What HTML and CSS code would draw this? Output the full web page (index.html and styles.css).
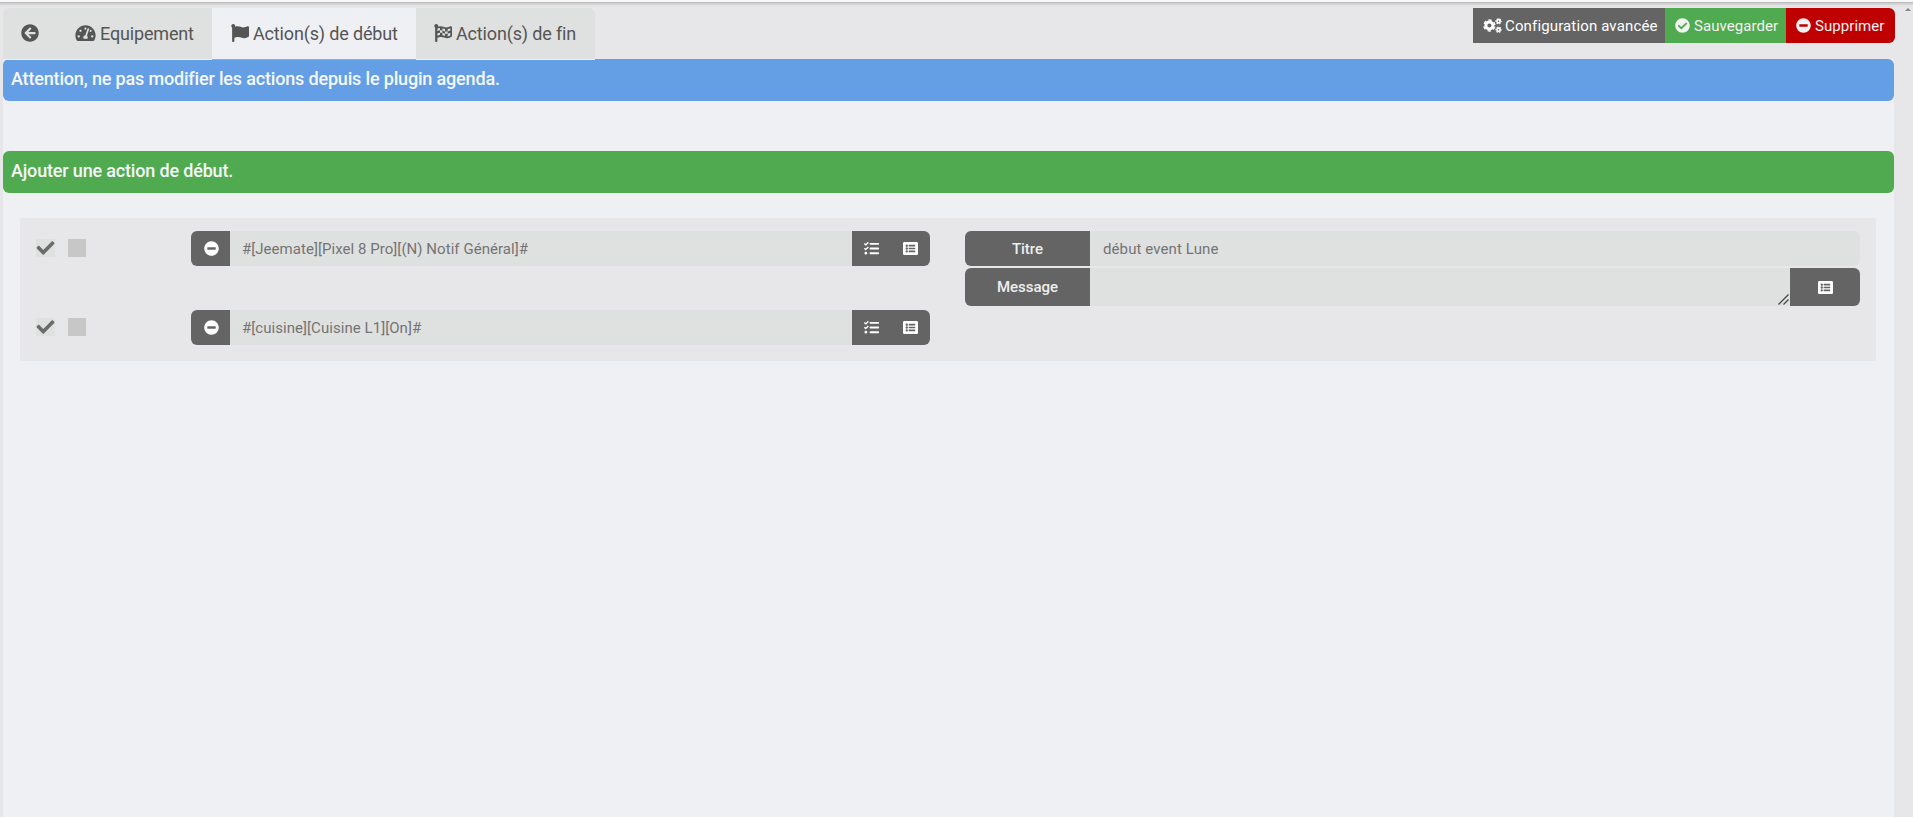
FILE: index.html
```html
<!DOCTYPE html>
<html lang="fr">
<head>
<meta charset="utf-8">
<title>Action(s) de début</title>
<link rel="stylesheet" href="styles.css">
</head>
<body>
<svg class="defs" aria-hidden="true">
  <symbol id="back" viewBox="0 0 512 512"><path d="M256 504C119 504 8 393 8 256S119 8 256 8s248 111 248 248-111 248-248 248zm28.9-143.6L209.4 288H392c13.3 0 24-10.7 24-24v-16c0-13.3-10.7-24-24-24H209.4l75.5-72.4c9.7-9.3 9.9-24.8.4-34.3l-11-10.9c-9.4-9.4-24.6-9.4-33.9 0L107.7 239c-9.4 9.4-9.4 24.6 0 33.9l132.7 132.7c9.4 9.4 24.6 9.4 33.9 0l11-10.9c9.5-9.5 9.3-25-.4-34.3z"/></symbol>
  <symbol id="gauge" viewBox="0 0 576 512"><path d="M288 32C128.94 32 0 160.94 0 320c0 52.8 14.25 102.26 39.06 144.8 5.61 9.62 16.3 15.2 27.44 15.2h443c11.14 0 21.83-5.58 27.44-15.2C561.75 422.26 576 372.8 576 320c0-159.06-128.94-288-288-288zm0 64c14.71 0 26.58 10.13 30.32 23.65-1.11 2.26-2.64 4.23-3.45 6.67l-9.22 27.67c-5.13 3.49-10.97 6.01-17.64 6.01-17.67 0-32-14.33-32-32S270.33 96 288 96zM96 384c-17.67 0-32-14.33-32-32s14.33-32 32-32 32 14.33 32 32-14.33 32-32 32zm48-160c-17.67 0-32-14.33-32-32s14.33-32 32-32 32 14.33 32 32-14.33 32-32 32zm246.77-72.41l-61.33 184C343.13 347.33 352 364.54 352 384c0 11.72-3.38 22.55-8.88 32H232.88c-5.5-9.45-8.88-20.28-8.88-32 0-33.94 26.5-61.43 59.9-63.59l61.34-184.01c4.17-12.56 17.73-19.45 30.36-15.17 12.57 4.19 19.35 17.79 15.17 30.36zm14.66 57.2l15.52-46.55c3.47-1.29 7.13-2.23 11.05-2.23 17.67 0 32 14.33 32 32s-14.33 32-32 32c-11.38-.01-20.89-6.28-26.57-15.22zM480 384c-17.67 0-32-14.33-32-32s14.33-32 32-32 32 14.33 32 32-14.33 32-32 32z"/></symbol>
  <symbol id="flag" viewBox="0 0 512 512"><path d="M349.565 98.783C295.978 98.783 251.721 64 184.348 64c-24.955 0-47.309 4.384-68.045 12.013a55.947 55.947 0 0 0 3.586-23.562C118.117 24.015 94.806 1.206 66.338.048 34.345-1.254 8 24.296 8 56c0 19.026 9.497 35.825 24 45.945V488c0 13.255 10.745 24 24 24h16c13.255 0 24-10.745 24-24v-94.4c28.311-12.064 63.582-22.122 114.435-22.122 53.588 0 97.844 34.783 165.217 34.783 48.169 0 86.667-16.294 122.505-40.858C506.84 359.452 512 349.571 512 339.045v-243.1c0-23.393-24.269-38.87-45.485-29.016-34.338 15.948-76.454 31.854-116.95 31.854z"/></symbol>
  <symbol id="checkered" viewBox="0 0 512 512"><path fill-rule="evenodd" d="M349.565 98.783C295.978 98.783 251.721 64 184.348 64c-24.955 0-47.309 4.384-68.045 12.013a55.947 55.947 0 0 0 3.586-23.562C118.117 24.015 94.806 1.206 66.338.048 34.345-1.254 8 24.296 8 56c0 19.026 9.497 35.825 24 45.945V488c0 13.255 10.745 24 24 24h16c13.255 0 24-10.745 24-24v-94.4c28.311-12.064 63.582-22.122 114.435-22.122 53.588 0 97.844 34.783 165.217 34.783 48.169 0 86.667-16.294 122.505-40.858C506.84 359.452 512 349.571 512 339.045v-243.1c0-23.393-24.269-38.87-45.485-29.016-34.338 15.948-76.454 31.854-116.95 31.854zM96 136Q130 120 170 112V180Q130 188 96 204zM240 118Q280 130 314 142V210Q280 198 240 186zM388 144Q430 134 464 118V182Q430 200 388 210zM170 180Q205 178 240 186V250Q205 244 170 246zM314 210Q350 216 388 210V276Q350 282 314 274zM96 268Q130 252 170 246V312Q130 320 96 336zM240 250Q280 262 314 274V342Q280 330 240 320zM388 276Q430 268 464 250V326Q430 346 388 354z"/></symbol>
  <symbol id="cogs" viewBox="0 0 640 512">
    <g fill="none" stroke="currentColor">
      <circle cx="214" cy="256" r="121" stroke-width="98"/><circle cx="214" cy="256" r="186" stroke-width="50" stroke-dasharray="110 84.780" stroke-dashoffset="-42"/>
      <circle cx="528" cy="112" r="56" stroke-width="56"/><circle cx="528" cy="112" r="90" stroke-width="36" stroke-dasharray="54 40.250" stroke-dashoffset="27"/>
      <circle cx="528" cy="400" r="56" stroke-width="56"/><circle cx="528" cy="400" r="90" stroke-width="36" stroke-dasharray="54 40.250" stroke-dashoffset="27"/>
    </g>
  </symbol>
  <symbol id="ok" viewBox="0 0 512 512"><path d="M504 256c0 136.967-111.033 248-248 248S8 392.967 8 256 119.033 8 256 8s248 111.033 248 248zM227.314 387.314l184-184c6.248-6.248 6.248-16.379 0-22.627l-22.627-22.627c-6.248-6.249-16.379-6.249-22.628 0L216 308.118l-70.059-70.059c-6.248-6.248-16.379-6.248-22.628 0l-22.627 22.627c-6.248 6.248-6.248 16.379 0 22.627l104 104c6.249 6.249 16.379 6.249 22.628.001z"/></symbol>
  <symbol id="minus" viewBox="0 0 512 512"><path d="M256 8C119 8 8 119 8 256s111 248 248 248 248-111 248-248S393 8 256 8zM124 296c-6.600 0-12-5.400-12-12v-56c0-6.600 5.400-12 12-12h264c6.600 0 12 5.400 12 12v56c0 6.600-5.400 12-12 12H124z"/></symbol>
  <symbol id="check" viewBox="0 0 512 512"><path d="M173.898 439.404l-166.400-166.400c-9.997-9.997-9.997-26.206 0-36.204l36.203-36.204c9.997-9.998 26.207-9.998 36.204 0L192 312.690 432.095 72.596c9.997-9.997 26.207-9.997 36.204 0l36.203 36.204c9.997 9.997 9.997 26.206 0 36.204l-294.400 294.401c-9.998 9.997-26.207 9.997-36.204-.001z"/></symbol>
  <symbol id="tasks" viewBox="0 0 512 512"><path d="M139.610 35.500a12 12 0 0 0-17 0L58.930 98.810l-22.700-22.120a12 12 0 0 0-17 0L3.530 92.410a12 12 0 0 0 0 17l47.590 47.400a12.780 12.780 0 0 0 17.610 0l15.590-15.620L156.520 69a12.090 12.090 0 0 0 .09-17zm0 159.190a12 12 0 0 0-17 0l-63.680 63.720-22.700-22.100a12 12 0 0 0-17 0L3.530 252a12 12 0 0 0 0 17L51 316.500a12.770 12.770 0 0 0 17.600 0l15.700-15.690 72.200-72.220a12 12 0 0 0 .09-16.900zM64 368c-26.490 0-48.590 21.500-48.590 48S37.530 464 64 464a48 48 0 0 0 0-96z"/><rect x="192" y="64" width="320" height="64" rx="16"/><rect x="192" y="224" width="320" height="64" rx="16"/><rect x="192" y="384" width="320" height="64" rx="16"/></symbol>
  <symbol id="list" viewBox="0 0 512 512"><path fill-rule="evenodd" d="M464 480H48c-26.510 0-48-21.490-48-48V80c0-26.510 21.490-48 48-48h416c26.510 0 48 21.490 48 48v352c0 26.510-21.490 48-48 48zM128 120a40 40 0 1 0 0 80 40 40 0 1 0 0-80zm0 96a40 40 0 1 0 0 80 40 40 0 1 0 0-80zm0 96a40 40 0 1 0 0 80 40 40 0 1 0 0-80zM204 132h200q12 0 12 12v32q0 12-12 12H204q-12 0-12-12v-32q0-12 12-12zm0 96h200q12 0 12 12v32q0 12-12 12H204q-12 0-12-12v-32q0-12 12-12zm0 96h200q12 0 12 12v32q0 12-12 12H204q-12 0-12-12v-32q0-12 12-12z"/></symbol>
</svg>
<div class="topline"></div>
<div class="page">
  <header class="head">
    <nav class="tabs">
      <a class="tab tab-back"><svg class="ti"><use href="#back"/></svg></a>
      <a class="tab tab-eq"><svg class="ti wide"><use href="#gauge"/></svg><span>Equipement</span></a>
      <a class="tab tab-start active"><svg class="ti"><use href="#flag"/></svg><span>Action(s) de début</span></a>
      <a class="tab tab-end"><svg class="ti"><use href="#checkered"/></svg><span>Action(s) de fin</span></a>
    </nav>
    <div class="buttons">
      <a class="btn config"><svg class="bi cog"><use href="#cogs"/></svg><span>Configuration avancée</span></a>
      <a class="btn save"><svg class="bi"><use href="#ok"/></svg><span>Sauvegarder</span></a>
      <a class="btn remove"><svg class="bi"><use href="#minus"/></svg><span>Supprimer</span></a>
    </div>
  </header>
  <main class="content">
    <div class="alert info">Attention, ne pas modifier les actions depuis le plugin agenda.</div>
    <div class="alert success">Ajouter une action de début.</div>
    <section class="well">
      <div class="row">
        <div class="checks"><span class="box on"><svg><use href="#check"/></svg></span><span class="box"></span></div>
        <div class="group cmd">
          <span class="addon first"><svg class="bi"><use href="#minus"/></svg></span>
          <span class="field">#[Jeemate][Pixel 8 Pro][(N) Notif Général]#</span>
          <span class="addon last"><svg class="bi"><use href="#tasks"/></svg><svg class="bi"><use href="#list"/></svg></span>
        </div>
        <div class="options">
          <div class="group"><span class="label">Titre</span><span class="field end">début event Lune</span></div>
          <div class="group tall"><span class="label">Message</span><span class="field area"><svg class="grip" viewBox="0 0 11 11"><path d="M.5 10.500 10.500.5M5.500 10.500l5-5" fill="none" stroke="#45454a" stroke-width="1.300"/></svg></span><span class="addon pick"><svg class="bi"><use href="#list"/></svg></span></div>
        </div>
      </div>
      <div class="row">
        <div class="checks"><span class="box on"><svg><use href="#check"/></svg></span><span class="box"></span></div>
        <div class="group cmd">
          <span class="addon first"><svg class="bi"><use href="#minus"/></svg></span>
          <span class="field">#[cuisine][Cuisine L1][On]#</span>
          <span class="addon last"><svg class="bi"><use href="#tasks"/></svg><svg class="bi"><use href="#list"/></svg></span>
        </div>
      </div>
    </section>
  </main>
</div>
<i class="scroll-up"></i>
</body>
</html>
```
FILE: styles.css
```css
* { box-sizing: border-box; }
body {
  margin: 0;
  height: 817px;
  display: flex;
  flex-direction: column;
  overflow: hidden;
  background: #e7e7e9;
  font: 15px/20px Roboto, sans-serif;
  color: #555;
}
svg { fill: currentColor; display: block; flex: none; }
.defs { position: absolute; width: 0; height: 0; }
.topline { height: 8px; flex: none; background: linear-gradient(#f8f8f8 0 2px, #bcbcbe 2px 3px, #cececf 3px 4px, #dadadb 4px 5px, #e2e2e4 5px 6px, #e7e7e9 6px); }
.page { flex: 1; margin: 0 19px 0 3px; display: flex; flex-direction: column; }
.head { height: 51px; display: flex; justify-content: space-between; margin-right: -1px; }
.tabs { display: flex; font-size: 18px; letter-spacing: -.16px; }
.tab { height: 52px; display: flex; align-items: center; gap: 4px; padding-bottom: 2px; background: #dfe1e0; border-bottom: 1px solid #eff0f3; position: relative; }
.tab span { position: relative; top: 1px; white-space: nowrap; }
.tab-back { width: 54px; padding-left: 18px; border-radius: 6px 0 0 0; }
.tab-eq { width: 155px; padding-left: 18px; }
.tab-start { width: 204px; padding-left: 19px; }
.tab-end { width: 179px; padding-left: 18px; border-radius: 0 6px 0 0; }
.tab.active { background: #eff0f3; border-bottom-color: #96c927; }
.ti { width: 18px; height: 18px; }
.ti.wide { width: 21px; }
.buttons { display: flex; height: 35px; color: #f2f2f2; }
.btn { display: flex; align-items: center; gap: 4px; padding-left: 10px; white-space: nowrap; letter-spacing: .06px; }
.config { width: 192px; background: #646464; color: #fff; gap: 3px; letter-spacing: .14px; }
.save { width: 121px; background: #50aa50; }
.remove { width: 109px; background: #bf0000; border-radius: 0 6px 6px 0; }
.bi { width: 15px; height: 15px; }
.bi.cog { width: 19px; }
.content { flex: 1; background: #eff0f3; }
.alert { height: 42px; border-radius: 6px; padding: 10px 8px; font-size: 18px; font-weight: 500; letter-spacing: -.17px; color: #f5f7fa; }
.info { background: #649fe6; }
.success { background: #50aa50; margin-top: 50px; }
.well { margin: 25px 18px 0 17px; height: 143px; padding: 13px 16px; background: #e7e7e9; }
.row { height: 79px; display: flex; align-items: flex-start; }
.checks { width: 155px; display: flex; gap: 13px; padding-top: 8px; }
.box { width: 18px; height: 18px; background: #c7c7c7; }
.box.on { width: 19px; background: #dfe1e0; color: #6b6b6b; }
.box svg { width: 19px; height: 18px; }
.group { display: flex; height: 35px; }
.cmd { width: 739px; }
.addon, .label { background: #646464; color: #fff; display: flex; align-items: center; justify-content: center; }
.addon.first { width: 39px; border-radius: 6px 0 0 6px; padding-left: 1px; }
.addon.last { width: 78px; border-radius: 0 6px 6px 0; gap: 24px; }
.field { flex: 1; background: #dfe1e0; color: #747474; padding: 8px 12px; white-space: nowrap; letter-spacing: .05px; }
.field.end { border-radius: 0 6px 6px 0; padding-left: 13px; letter-spacing: .1px; }
.options { width: 895px; margin-left: 35px; display: flex; flex-direction: column; gap: 2px; }
.tall { height: 38px; }
.label { width: 125px; border-radius: 6px 0 0 6px; color: #eee; font-weight: 500; }
.addon.pick { width: 70px; border-radius: 0 6px 6px 0; }
.field.area { display: flex; align-items: flex-end; justify-content: flex-end; padding: 0 1px 1px; }
.grip { width: 11px; height: 11px; }
.scroll-up { position: absolute; left: 1905px; top: 8px; border: 3px solid transparent; border-top: 0; border-bottom: 3px solid #858589; }
```
